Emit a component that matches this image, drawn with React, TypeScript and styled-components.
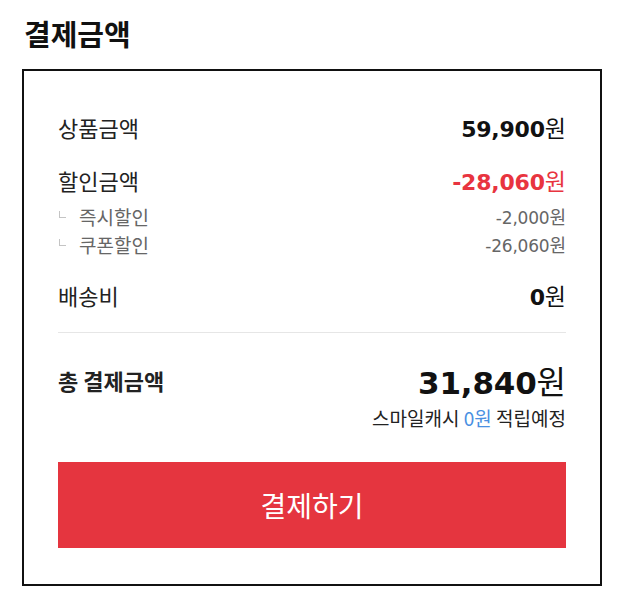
import React from 'react'
import styled, { createGlobalStyle } from 'styled-components'

const GlobalStyle = createGlobalStyle`
  html, body {
    margin: 0;
    padding: 0;
    background: #ffffff;
  }
  body {
    font-family: "Noto Sans CJK KR", "Noto Sans", sans-serif;
    color: #222222;
  }
`;

const NUM_FONT = `"DejaVu Sans", "Noto Sans CJK KR", sans-serif`;

const Page = styled.div`
  width: 580px;
  padding: 16px 16px 0 22px;
`;

const Title = styled.h2`
  margin: 0 0 19px 2px;
  font-size: 29px;
  line-height: 34px;
  font-weight: 700;
  color: #111111;
`;

const Panel = styled.div`
  border: 2px solid #111111;
  padding: 40px 34px 36px;
  background: #ffffff;
`;

const Row = styled.div<{ $top?: number; $height?: number }>`
  display: flex;
  align-items: center;
  justify-content: space-between;
  margin-top: ${p => p.$top || 0}px;
  height: ${p => p.$height || 32}px;
`;

const Label = styled.span<{ $bold?: boolean }>`
  font-size: 22px;
  font-weight: ${p => (p.$bold ? 700 : 400)};
  color: #222222;
`;

const SubLabel = styled.span`
  display: flex;
  align-items: center;
  font-size: 19px;
  color: #666666;
`;

const Corner = styled.i`
  display: inline-block;
  width: 6px;
  height: 6px;
  margin: -4px 13px 0 1px;
  border-left: 1px solid #c4c4c4;
  border-bottom: 1px solid #c4c4c4;
`;

const Price = styled.span<{ $size: number; $color?: string; $bold?: boolean }>`
  font-family: ${NUM_FONT};
  font-size: ${p => p.$size}px;
  font-weight: ${p => (p.$bold ? 700 : 400)};
  color: ${p => p.$color || '#111111'};
  letter-spacing: -0.2px;
`;

const Unit = styled.span<{ $size: number }>`
  font-family: "Noto Sans CJK KR", sans-serif;
  font-size: ${p => p.$size}px;
  font-weight: 400;
  letter-spacing: 0;
`;

const Divider = styled.hr`
  margin: 21px 0 0;
  border: none;
  border-top: 1px solid #e6e6e6;
  height: 0;
`;

const CashLine = styled.div`
  margin-top: 7px;
  height: 22px;
  line-height: 22px;
  text-align: right;
  font-size: 19px;
  color: #222222;
`;

const CashPoint = styled.span`
  color: #4a90e2;
`;

const PayButton = styled.button`
  display: flex;
  align-items: center;
  justify-content: center;
  width: 100%;
  height: 86px;
  margin-top: 33px;
  border: none;
  background: #e5353f;
  color: #ffffff;
  font-family: "Noto Sans CJK KR", sans-serif;
  font-size: 28px;
  cursor: pointer;
`;

type Line = { label: string; amount: string; color?: string; subs?: { label: string; amount: string }[] };

const lines: Line[] = [
  { label: '상품금액', amount: '59,900' },
  {
    label: '할인금액',
    amount: '-28,060',
    color: '#e8343f',
    subs: [
      { label: '즉시할인', amount: '-2,000' },
      { label: '쿠폰할인', amount: '-26,060' },
    ],
  },
  { label: '배송비', amount: '0' },
];

export default function App() {
  return (
    <>
      <GlobalStyle />
      <Page>
        <Title>결제금액</Title>
        <Panel>
          {lines.map((line, i) => (
            <React.Fragment key={line.label}>
              <Row $top={i === 0 ? 0 : 21}>
                <Label>{line.label}</Label>
                <Price $size={22} $bold $color={line.color}>
                  {line.amount}
                  <Unit $size={23}>원</Unit>
                </Price>
              </Row>
              {line.subs &&
                line.subs.map((sub, j) => (
                  <Row key={sub.label} $top={j === 0 ? 6 : 0} $height={28}>
                    <SubLabel>
                      <Corner />
                      {sub.label}
                    </SubLabel>
                    <Price $size={17} $color="#666666">
                      {sub.amount}
                      <Unit $size={18}>원</Unit>
                    </Price>
                  </Row>
                ))}
            </React.Fragment>
          ))}
          <Divider />
          <Row $top={27} $height={40}>
            <Label $bold>총 결제금액</Label>
            <Price $size={31} $bold>
              31,840
              <Unit $size={32}>원</Unit>
            </Price>
          </Row>
          <CashLine>
            스마일캐시 <CashPoint>0원</CashPoint> 적립예정
          </CashLine>
          <PayButton>결제하기</PayButton>
        </Panel>
      </Page>
    </>
  );
}
